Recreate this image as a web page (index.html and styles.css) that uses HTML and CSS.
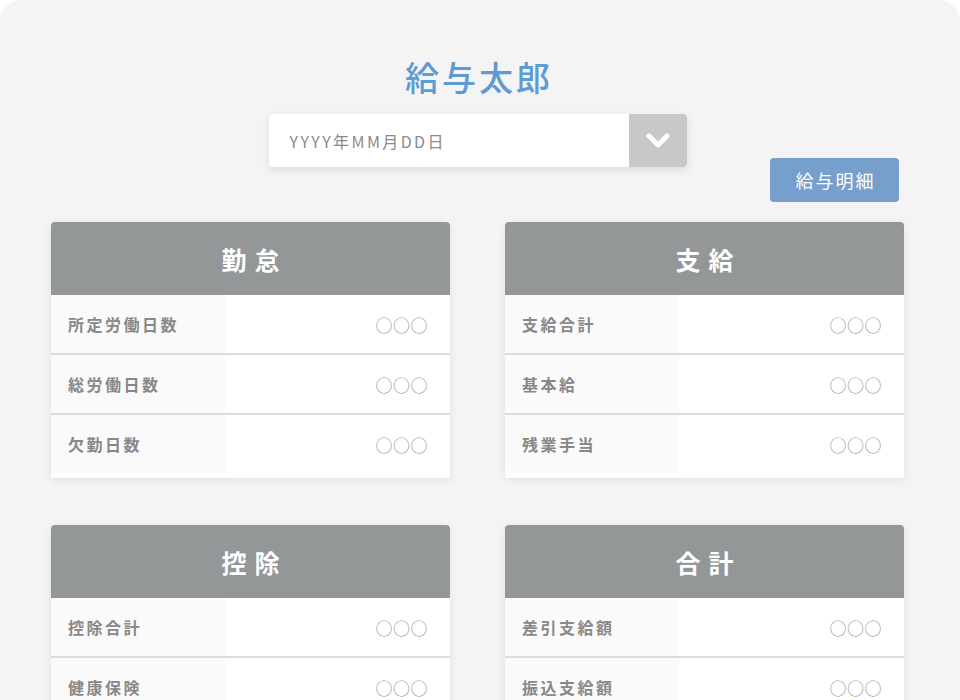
FILE: index.html
```html
<!DOCTYPE html>
<html lang="ja">
<head>
    <meta charset="UTF-8">
    <meta name="viewport" content="width=device-width, initial-scale=1.0">
    <title>給与明細</title>
    <link rel="stylesheet" href="styles.css">
</head>
<body>
    <div class="page">
        <h1 class="name">給与太郎</h1>
        <div class="date-select">
            <div class="date-text">YYYY年MM月DD日</div>
            <div class="date-btn">
                <svg width="24" height="16" viewBox="0 0 24 16">
                    <polyline points="3,3 12,12 21,3" fill="none" stroke="#fff" stroke-width="5" stroke-linecap="round" stroke-linejoin="round"/>
                </svg>
            </div>
        </div>
        <div class="actions">
            <button class="btn-detail">給与明細</button>
        </div>

        <div class="cards">
            <div class="card">
                <div class="card-head">勤怠</div>
                <div class="row"><div class="label">所定労働日数</div><div class="value">○○○</div></div>
                <div class="row"><div class="label">総労働日数</div><div class="value">○○○</div></div>
                <div class="row"><div class="label">欠勤日数</div><div class="value">○○○</div></div>
            </div>
            <div class="card">
                <div class="card-head">支給</div>
                <div class="row"><div class="label">支給合計</div><div class="value">○○○</div></div>
                <div class="row"><div class="label">基本給</div><div class="value">○○○</div></div>
                <div class="row"><div class="label">残業手当</div><div class="value">○○○</div></div>
            </div>
            <div class="card">
                <div class="card-head">控除</div>
                <div class="row"><div class="label">控除合計</div><div class="value">○○○</div></div>
                <div class="row"><div class="label">健康保険</div><div class="value">○○○</div></div>
                <div class="row"><div class="label">厚生年金</div><div class="value">○○○</div></div>
            </div>
            <div class="card">
                <div class="card-head">合計</div>
                <div class="row"><div class="label">差引支給額</div><div class="value">○○○</div></div>
                <div class="row"><div class="label">振込支給額</div><div class="value">○○○</div></div>
                <div class="row"><div class="label">現金支給額</div><div class="value">○○○</div></div>
            </div>
        </div>
    </div>
</body>
</html>
```

FILE: styles.css
```css
html, body {
    margin: 0;
    background-color: #fff;
    font-family: "Noto Sans CJK JP", "Noto Sans", sans-serif;
}

.page {
    height: 700px;
    box-sizing: border-box;
    padding: 56px 56px 0 51px;
    background-color: #f4f4f4;
    border-radius: 22px 22px 0 0;
    overflow: hidden;
}

.name {
    margin: 0;
    padding-left: 3px;
    text-align: center;
    font-size: 34px;
    font-weight: 500;
    line-height: 41px;
    letter-spacing: 3px;
    color: #5f9bd3;
}

.date-select {
    display: flex;
    width: 418px;
    height: 53px;
    margin: 17px auto 0;
    background-color: #fff;
    border-radius: 4px;
    box-shadow: 0 3px 8px rgba(0, 0, 0, 0.1);
    overflow: hidden;
}

.date-text {
    flex: 1;
    display: flex;
    align-items: center;
    padding-left: 21px;
    font-size: 16px;
    letter-spacing: 2.4px;
    color: #8a8a8a;
}

.date-btn {
    width: 58px;
    display: flex;
    align-items: center;
    justify-content: center;
    background-color: #c8c8c8;
}

.actions {
    display: flex;
    justify-content: flex-end;
    margin-top: -9px;
    padding-right: 5px;
}

.btn-detail {
    width: 129px;
    height: 44px;
    border: none;
    border-radius: 4px;
    background-color: #76a0cb;
    color: #fff;
    font-family: inherit;
    font-size: 18px;
    letter-spacing: 2px;
    padding: 0 0 0 2px;
}

.cards {
    display: grid;
    grid-template-columns: 399px 399px;
    column-gap: 55px;
    row-gap: 47px;
    margin-top: 20px;
}

.card {
    background-color: #fff;
    border-radius: 4px 4px 0 0;
    box-shadow: 0 2px 8px rgba(0, 0, 0, 0.08);
    padding-bottom: 5px;
}

.card-head {
    height: 73px;
    display: flex;
    align-items: center;
    justify-content: center;
    padding-left: 8px;
    background-color: #949797;
    color: #fff;
    font-size: 25px;
    font-weight: 700;
    letter-spacing: 8px;
    border-radius: 4px 4px 0 0;
}

.row {
    display: flex;
    height: 58px;
    border-bottom: 2px solid #dcdcdc;
}

.row:last-child {
    border-bottom: none;
}

.label {
    width: 157px;
    padding-left: 17px;
    display: flex;
    align-items: center;
    background-color: #fafafa;
    font-size: 16px;
    font-weight: 700;
    letter-spacing: 2.5px;
    color: #888;
}

.value {
    flex: 1;
    display: flex;
    align-items: center;
    justify-content: flex-end;
    padding-right: 22px;
    font-size: 17px;
    letter-spacing: 0.5px;
    color: #999;
}
```
